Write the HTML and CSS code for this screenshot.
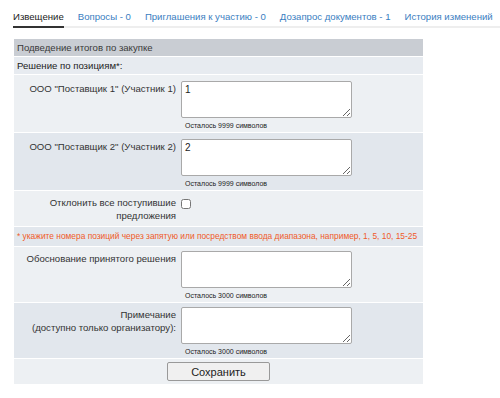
FILE: index.html
```html
<!DOCTYPE html>
<html lang="ru">
<head>
<meta charset="UTF-8">
<title>Подведение итогов</title>
<link rel="stylesheet" href="styles.css">
</head>
<body>
<div class="page">
  <ul class="tabs">
    <li class="active">Извещение</li>
    <li>Вопросы - 0</li>
    <li>Приглашения к участию - 0</li>
    <li>Дозапрос документов - 1</li>
    <li>История изменений</li>
  </ul>

  <table class="form">
    <colgroup>
      <col class="col-label">
      <col>
    </colgroup>
    <tr class="head">
      <td colspan="2">Подведение итогов по закупке</td>
    </tr>
    <tr class="section">
      <td colspan="2">Решение по позициям*:</td>
    </tr>
    <tr class="odd">
      <td class="label">ООО "Поставщик 1" (Участник 1)</td>
      <td class="field">
        <textarea>1</textarea>
        <div class="hint">Осталось 9999 символов</div>
      </td>
    </tr>
    <tr class="even">
      <td class="label">ООО "Поставщик 2" (Участник 2)</td>
      <td class="field">
        <textarea>2</textarea>
        <div class="hint">Осталось 9999 символов</div>
      </td>
    </tr>
    <tr class="odd">
      <td class="label check-label">Отклонить все поступившие<br>предложения</td>
      <td class="field check-field"><input type="checkbox"></td>
    </tr>
    <tr class="even">
      <td colspan="2" class="note">* укажите номера позиций через запятую или посредством ввода диапазона, например, 1, 5, 10, 15-25</td>
    </tr>
    <tr class="odd compact">
      <td class="label">Обоснование принятого решения</td>
      <td class="field">
        <textarea></textarea>
        <div class="hint">Осталось 3000 символов</div>
      </td>
    </tr>
    <tr class="even compact">
      <td class="label">Примечание<br>(доступно только организатору):</td>
      <td class="field">
        <textarea></textarea>
        <div class="hint">Осталось 3000 символов</div>
      </td>
    </tr>
    <tr class="odd">
      <td colspan="2" class="actions"><button>Сохранить</button></td>
    </tr>
  </table>
</div>
</body>
</html>
```

FILE: styles.css
```css
html, body, ul, li, table, td, textarea, button, input {
  margin: 0;
  padding: 0;
  box-sizing: border-box;
}

body {
  background-color: #fff;
  font-family: "Liberation Sans", Arial, sans-serif;
  color: #333;
}

.page {
  padding: 8px 0 0 13px;
}

.tabs {
  list-style: none;
  display: flex;
  gap: 14px;
  border-bottom: 2px solid #eee;
  font-size: 9.6px;
  white-space: nowrap;
}

.tabs li {
  padding: 3px 0 4px;
  color: #3a7ebf;
  margin-bottom: -2px;
  border-bottom: 2px solid transparent;
}

.tabs li.active {
  color: #222;
  border-bottom-color: #333;
}

.form {
  margin: 10px 0 0 1px;
  width: 409px;
  table-layout: fixed;
  border-collapse: separate;
  border-spacing: 0 1px;
  font-size: 9.6px;
}

.col-label {
  width: 167px;
}

.form td {
  padding: 0;
  vertical-align: top;
}

.head td {
  background-color: #c9cdd3;
  padding: 3px 3px 3px;
  color: #3a3a3a;
}

.section td {
  background-color: #e7ebf0;
  padding: 3px 3px 3px;
  color: #222;
}

.odd td {
  background-color: #edf0f3;
}

.even td {
  background-color: #e2e7ed;
}

.label {
  text-align: right;
  padding: 7px 5px 0 0 !important;
  color: #333;
  line-height: 13px;
}

.field {
  padding: 6px 0 2px 0 !important;
}

.compact .label {
  padding-top: 5px !important;
}

.compact .field {
  padding-top: 4px !important;
}

.field textarea {
  display: block;
  width: 171px;
  height: 37px;
  border: 1px solid #a9a9a9;
  border-radius: 2px;
  padding: 2px 3px;
  font-family: "Liberation Sans", Arial, sans-serif;
  font-size: 10px;
  color: #222;
  resize: vertical;
}

.hint {
  font-size: 7px;
  line-height: 8px;
  margin: 4px 0 0 4px;
  color: #222;
}

.check-label {
  padding: 5px 5px 4px 0 !important;
}

.check-field {
  padding-top: 8px !important;
}

.check-field input {
  width: 10px;
  height: 10px;
}

.note {
  color: #f05a28;
  padding: 4px 3px 5px !important;
  font-size: 8.4px;
  white-space: nowrap;
  overflow: hidden;
}

.actions {
  text-align: center;
  padding: 3px 0 3px !important;
}

.actions button {
  width: 103px;
  height: 19px;
  border: 1px solid #999;
  border-radius: 2px;
  background-color: #f0f0f0;
  font-family: "Liberation Sans", Arial, sans-serif;
  font-size: 11px;
  color: #222;
}
```
